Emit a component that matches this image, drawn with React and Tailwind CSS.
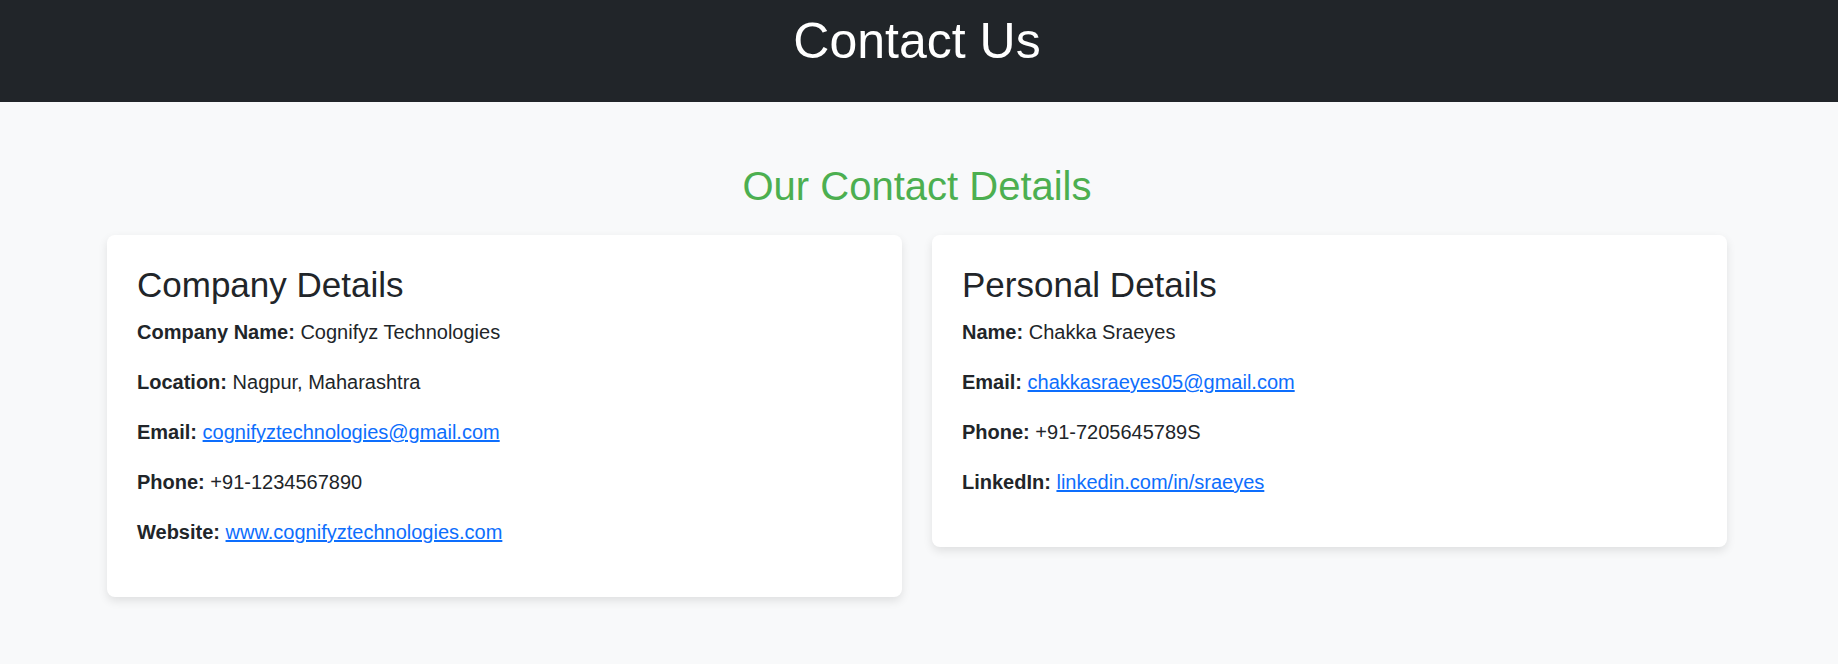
const company = [
  { label: 'Company Name:', value: 'Cognifyz Technologies' },
  { label: 'Location:', value: 'Nagpur, Maharashtra' },
  { label: 'Email:', value: 'cognifyztechnologies@gmail.com', link: true },
  { label: 'Phone:', value: '+91-1234567890' },
  { label: 'Website:', value: 'www.cognifyztechnologies.com', link: true },
]

const personal = [
  { label: 'Name:', value: 'Chakka Sraeyes' },
  { label: 'Email:', value: 'chakkasraeyes05@gmail.com', link: true },
  { label: 'Phone:', value: '+91-7205645789S' },
  { label: 'LinkedIn:', value: 'linkedin.com/in/sraeyes', link: true },
]

function DetailsCard({ title, rows }) {
  return (
    <section className="rounded-lg bg-white p-[30px] shadow-[0_4px_10px_rgba(0,0,0,0.1)]">
      <h3 className="mb-[12px] text-[35px] leading-[40px] font-normal text-[#212529]">{title}</h3>
      {rows.map((row) => (
        <p key={row.label} className="mb-[20px] text-[20px] leading-[30px] text-[#212529]">
          <strong className="font-bold">{row.label}</strong>{' '}
          {row.link ? (
            <a href="#" className="text-[#0d6efd] underline">
              {row.value}
            </a>
          ) : (
            row.value
          )}
        </p>
      ))}
    </section>
  )
}

export default function App() {
  return (
    <div className="min-h-[664px] bg-[#f8f9fa] font-['Liberation_Sans',Arial,sans-serif]">
      <header className="h-[102px] bg-[#212529] pr-[4px] pt-[11px] text-center">
        <h1 className="text-[50px] leading-[60px] font-normal text-white">Contact Us</h1>
      </header>

      <main className="pr-[4px] pt-[60px]">
        <h2 className="text-center text-[40px] leading-[48px] font-normal text-[#4caf50]">
          Our Contact Details
        </h2>
        <div className="mx-auto mt-[25px] grid w-[1620px] grid-cols-2 items-start gap-[30px]">
          <DetailsCard title="Company Details" rows={company} />
          <DetailsCard title="Personal Details" rows={personal} />
        </div>
      </main>
    </div>
  )
}
